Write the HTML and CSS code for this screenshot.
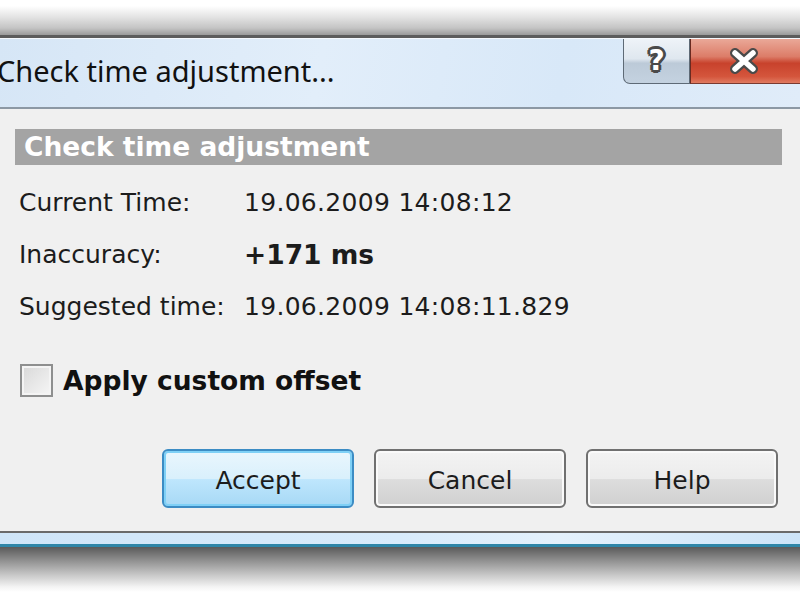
FILE: index.html
```html
<!DOCTYPE html>
<html lang="en">
<head>
    <meta charset="UTF-8">
    <meta name="viewport" content="width=device-width, initial-scale=1.0">
    <title>Check time adjustment...</title>
    <link rel="stylesheet" href="styles.css">
</head>
<body>
    <div class="topShadow"></div>

    <div class="window">
        <div class="titlebar"> <!-- barra de titulo -->
            <span class="titleText">Check time adjustment...</span>
            <div class="titleButtons">
                <div class="btnHelpTitle"><span class="qmark">?</span></div>
                <div class="btnClose">
                    <svg width="40" height="30" viewBox="0 0 40 30">
                        <path d="M11 7 L29 23 M29 7 L11 23" stroke="#4a4a4a" stroke-width="10" stroke-linecap="round"/>
                        <path d="M11 7 L29 23 M29 7 L11 23" stroke="#ffffff" stroke-width="5.5" stroke-linecap="round"/>
                    </svg>
                </div>
            </div>
        </div>

        <div class="content">
            <div class="header">Check time adjustment</div>

            <div class="rows">
                <span class="label">Current Time:</span>
                <span class="value">19.06.2009 14:08:12</span>

                <span class="label">Inaccuracy:</span>
                <span class="value bold">+171 ms</span>

                <span class="label">Suggested time:</span>
                <span class="value">19.06.2009 14:08:11.829</span>
            </div>

            <label class="checkRow">
                <span class="checkBox"></span>
                <span class="checkText">Apply custom offset</span>
            </label>

            <div class="buttons">
                <button class="button default">Accept</button>
                <button class="button">Cancel</button>
                <button class="button">Help</button>
            </div>
        </div>

        <div class="bottomFrame"></div>
    </div>

    <div class="bottomShadow"></div>
</body>
</html>
```

FILE: styles.css
```css
* {
    box-sizing: border-box;
}

body {
    margin: 0;
    background-color: white;
    overflow: hidden;
    font-family: "DejaVu Sans", sans-serif;
    color: #1c1c1c;
}

.topShadow {
    height: 35px;
    background: linear-gradient(#ffffff 0px, #ffffff 6px, #e6e6e6 16px, #c4c4c4 28px, #9a9a9a 35px);
}

.window {
    border-top: 3px solid #5c5c5c;
}

.titlebar {
    height: 71px;
    display: flex;
    justify-content: space-between;
    align-items: flex-start;
    border-top: 1px solid #f4f9fe;
    border-bottom: 2px solid #8c98a4;
    background: linear-gradient(100deg, #d6e6f6 0%, #e2eefa 40%, #d8e8f8 70%, #e0ecf9 100%);
}

.titleText {
    margin-left: -3px;
    margin-top: 12px;
    font-family: "Noto Sans", "Open Sans", sans-serif;
    font-size: 29px;
    color: #111;
    white-space: nowrap;
}

.titleButtons {
    display: flex;
}

.btnHelpTitle {
    width: 67px;
    height: 45px;
    display: flex;
    justify-content: center;
    align-items: center;
    border: 1px solid #5e6a76;
    border-top: 0;
    border-bottom-left-radius: 7px;
    background: linear-gradient(#eef3f8 0%, #dfe7ef 45%, #bccad8 55%, #c4d2e0 100%);
}

.qmark {
    font-family: "DejaVu Sans", sans-serif;
    font-weight: bold;
    font-size: 28px;
    line-height: 30px;
    color: white;
    -webkit-text-stroke: 2px #ffffff;
    paint-order: stroke fill;
    text-shadow: -3px 0 #4a4a4a, 3px 0 #4a4a4a, 0 -3px #4a4a4a, 0 3px #4a4a4a,
                 -2px -2px #4a4a4a, 2px 2px #4a4a4a, -2px 2px #4a4a4a, 2px -2px #4a4a4a;
}

.btnClose {
    width: 110px;
    height: 45px;
    display: flex;
    align-items: center;
    padding-left: 33px;
    border-left: 1px solid #6a2a20;
    border-bottom: 1px solid #7a3a30;
    background: linear-gradient(#eaa898 0%, #dc7c68 40%, #c8422c 55%, #d4553c 85%, #e07a60 100%);
}

.content {
    height: 422px;
    padding: 20px 22px 22px 0;
    background-color: #f0f0f0;
    font-size: 25px;
}

.header {
    height: 36px;
    margin-left: 15px;
    margin-right: -4px;
    padding-left: 9px;
    background-color: #a4a4a4;
    color: white;
    font-weight: bold;
    font-size: 26.5px;
    line-height: 36px;
}

.rows {
    display: grid;
    grid-template-columns: 225px auto;
    margin-top: 12px;
    margin-left: 19px;
    line-height: 52px;
}

.value {
    letter-spacing: 0.3px;
}

.bold {
    font-weight: bold;
    font-size: 26.5px;
    letter-spacing: 0;
}

.checkRow {
    display: flex;
    align-items: center;
    gap: 10px;
    margin-top: 31px;
    margin-left: 20px;
    height: 33px;
}

.checkBox {
    width: 33px;
    height: 33px;
    border: 2px solid #8e8f8f;
    background: linear-gradient(135deg, #d8d8d8, #f6f6f6);
    box-shadow: inset 0 0 0 2px #f4f4f4;
}

.checkText {
    font-weight: bold;
    font-size: 26.5px;
    color: #111;
}

.buttons {
    display: flex;
    justify-content: flex-end;
    gap: 20px;
    margin-top: 52px;
}

.button {
    width: 192px;
    height: 59px;
    padding: 3px 0 0 0;
    font-family: inherit;
    font-size: 25px;
    color: #1c1c1c;
    border: 2px solid #707070;
    border-radius: 6px;
    background: linear-gradient(#f3f3f3 0%, #ececec 50%, #dddddd 52%, #d0d0d0 100%);
    box-shadow: inset 0 0 0 2px #fafafa;
}

.button.default {
    border-color: #3c8cc4;
    background: linear-gradient(#eaf6fd 0%, #d9f0fc 50%, #bee6fd 52%, #a7d9f5 100%);
    box-shadow: inset 0 0 0 2px #7fd0f6;
}

.bottomFrame {
    height: 16px;
    border-top: 2px solid #6a6a6a;
    border-bottom: 3px solid #2f86a8;
    background: linear-gradient(90deg, #cfe5f8 0%, #d8ebfb 50%, #e4f1fc 70%, #cde4f8 100%);
}

.bottomShadow {
    height: 45px;
    background: linear-gradient(#5a5a5a 0px, #8a8a8a 12px, #c8c8c8 28px, #f4f4f4 40px, #ffffff 45px);
}
```
